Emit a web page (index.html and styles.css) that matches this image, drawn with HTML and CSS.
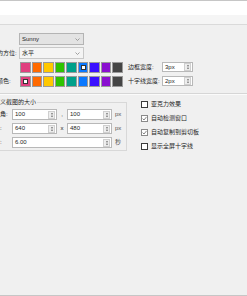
FILE: index.html
```html
<!DOCTYPE html>
<html lang="zh-CN">
<head>
<meta charset="utf-8">
<title>设置</title>
<link rel="stylesheet" href="styles.css">
</head>
<body>
<div class="top"></div>
<div class="band"></div>
<div class="content">
  <div class="form">
    <div class="row">
      <span class="lbl">主题:</span>
      <div class="combo combo-gray"><span class="ctext">Sunny</span><svg class="chev" width="5" height="3" viewBox="0 0 5 3"><path d="M0.5 0.5 L2.5 2.5 L4.5 0.5" fill="none" stroke="#8a8a8a" stroke-width="0.8"/></svg></div>
    </div>
    <div class="row">
      <span class="lbl">工具栏的方位:</span>
      <div class="combo combo-light"><span class="ctext">水平</span><svg class="chev" width="5" height="3" viewBox="0 0 5 3"><path d="M0.5 0.5 L2.5 2.5 L4.5 0.5" fill="none" stroke="#8a8a8a" stroke-width="0.8"/></svg></div>
    </div>
    <div class="row">
      <span class="lbl">颜色:</span>
      <div class="swatches">
        <span class="sw c1"></span><span class="sw c2"></span><span class="sw c3"></span><span class="sw c4"></span><span class="sw c5"></span><span class="sw c6 sel"></span><span class="sw c7"></span><span class="sw c8"></span><span class="sw c9"></span>
      </div>
      <span class="lbl2">边框宽度:</span>
      <div class="spinbox w-px"><span class="itext">3px</span><span class="spin"><svg width="5" height="8" viewBox="0 0 5 8"><path d="M2.5 1 L4 3 L1 3 Z M1 5 L4 5 L2.5 7 Z" fill="#555"/></svg></span></div>
    </div>
    <div class="row">
      <span class="lbl">十字线颜色:</span>
      <div class="swatches">
        <span class="sw c1 sel"></span><span class="sw c2"></span><span class="sw c3"></span><span class="sw c4"></span><span class="sw c5"></span><span class="sw c6"></span><span class="sw c7"></span><span class="sw c8"></span><span class="sw c9"></span>
      </div>
      <span class="lbl2">十字线宽度:</span>
      <div class="spinbox w-px"><span class="itext">2px</span><span class="spin"><svg width="5" height="8" viewBox="0 0 5 8"><path d="M2.5 1 L4 3 L1 3 Z M1 5 L4 5 L2.5 7 Z" fill="#555"/></svg></span></div>
    </div>
  </div>
  <div class="sep"></div>
  <div class="lower">
    <fieldset class="group">
      <legend>自定义截图的大小</legend>
      <div class="grow">
        <span class="glbl">左上角:</span>
        <div class="spinbox w-half"><span class="itext">100</span><span class="spin"><svg width="5" height="8" viewBox="0 0 5 8"><path d="M2.5 1 L4 3 L1 3 Z M1 5 L4 5 L2.5 7 Z" fill="#555"/></svg></span></div>
        <span class="mid">,</span>
        <div class="spinbox w-half"><span class="itext">100</span><span class="spin"><svg width="5" height="8" viewBox="0 0 5 8"><path d="M2.5 1 L4 3 L1 3 Z M1 5 L4 5 L2.5 7 Z" fill="#555"/></svg></span></div>
        <span class="unit">px</span>
      </div>
      <div class="grow">
        <span class="glbl">大小:</span>
        <div class="spinbox w-half"><span class="itext">640</span><span class="spin"><svg width="5" height="8" viewBox="0 0 5 8"><path d="M2.5 1 L4 3 L1 3 Z M1 5 L4 5 L2.5 7 Z" fill="#555"/></svg></span></div>
        <span class="mid">x</span>
        <div class="spinbox w-half"><span class="itext">480</span><span class="spin"><svg width="5" height="8" viewBox="0 0 5 8"><path d="M2.5 1 L4 3 L1 3 Z M1 5 L4 5 L2.5 7 Z" fill="#555"/></svg></span></div>
        <span class="unit">px</span>
      </div>
      <div class="grow">
        <span class="glbl">延时:</span>
        <div class="spinbox w-full"><span class="itext">6.00</span><span class="spin"><svg width="5" height="8" viewBox="0 0 5 8"><path d="M2.5 1 L4 3 L1 3 Z M1 5 L4 5 L2.5 7 Z" fill="#555"/></svg></span></div>
        <span class="unit">秒</span>
      </div>
    </fieldset>
    <div class="checks">
      <label class="chk"><span class="box"></span><span>亚克力效果</span></label>
      <label class="chk"><span class="box on"><svg width="5" height="5" viewBox="0 0 5 5"><path d="M0.6 2.6 L2 4 L4.5 0.9" fill="none" stroke="#666" stroke-width="0.8"/></svg></span><span>自动检测窗口</span></label>
      <label class="chk"><span class="box on"><svg width="5" height="5" viewBox="0 0 5 5"><path d="M0.6 2.6 L2 4 L4.5 0.9" fill="none" stroke="#666" stroke-width="0.8"/></svg></span><span>自动复制到剪切板</span></label>
      <label class="chk"><span class="box"></span><span>显示全屏十字线</span></label>
    </div>
  </div>
</div>
<div class="spacer"></div>
<div class="bottom"></div>
</body>
</html>
```

FILE: styles.css
```css
html, body {
  margin: 0;
  padding: 0;
}

body {
  width: 247px;
  height: 296px;
  overflow: hidden;
  background: #f0f0f0;
  font-family: "Liberation Sans", "Noto Sans CJK SC", sans-serif;
  font-size: 6px;
  line-height: 7px;
  color: #1e1e1e;
  display: flex;
  flex-direction: column;
}

.top {
  height: 15px;
  flex: none;
  box-sizing: border-box;
  background: #ffffff;
  border-top: 1px solid #c6c6c6;
}

.band {
  height: 10px;
  flex: none;
  box-sizing: border-box;
  background: #f5f5f5;
  border-bottom: 1px solid #dadada;
}

.content {
  padding-top: 8px;
  display: flex;
  flex-direction: column;
}

.form {
  display: flex;
  flex-direction: column;
  gap: 2px;
  margin-left: -21px;
}

.row {
  display: flex;
  align-items: center;
  height: 12px;
}

.lbl {
  width: 40px;
  flex: none;
  white-space: nowrap;
}

.combo {
  width: 65px;
  height: 12px;
  box-sizing: border-box;
  display: flex;
  align-items: center;
  justify-content: space-between;
  padding: 0 3px 0 2px;
  border: 1px solid #b4b4b4;
}

.combo-gray {
  background: #e3e3e3;
}

.combo-light {
  background: #f4f4f4;
  border-color: #c8c8c8;
}

.swatches {
  width: 103px;
  margin-left: 1px;
  display: grid;
  grid-template-columns: repeat(9, 1fr);
  gap: 1px;
  flex: none;
}

.sw {
  height: 11px;
  box-sizing: border-box;
  border: 1px solid #9a9a9a;
  display: flex;
  align-items: center;
  justify-content: center;
}

.sw.sel::after {
  content: "";
  width: 3px;
  height: 3px;
  background: #fff;
  border: 1px solid #333;
}

.c1 { background: #e0407f; }
.c2 { background: #ff6a00; }
.c3 { background: #ffc800; }
.c4 { background: #2ec400; }
.c5 { background: #00a08a; }
.c6 { background: #0a78ff; }
.c7 { background: #3a10ff; }
.c8 { background: #8a0fd0; }
.c9 { background: #454545; }

.lbl2 {
  width: 34px;
  margin-left: 5px;
  flex: none;
  white-space: nowrap;
}

.spinbox {
  height: 11px;
  box-sizing: border-box;
  background: #ffffff;
  border: 1px solid #b8b8b8;
  display: flex;
  align-items: center;
  justify-content: space-between;
  padding: 0 0 0 2px;
  flex: none;
}

.w-px {
  width: 31px;
  height: 10px;
}

.w-half {
  width: 45px;
}

.w-full {
  width: 100px;
}

.spin {
  width: 7px;
  height: 8px;
  margin-right: 1px;
  box-sizing: border-box;
  background: #eeeeee;
  border: 1px solid #cfcfcf;
  display: flex;
  align-items: center;
  justify-content: center;
}

.spin svg {
  width: 4px;
  height: 6px;
}

.sep {
  height: 2px;
  box-sizing: border-box;
  margin-top: 6px;
  border-top: 1px solid #d6d6d6;
  border-bottom: 1px solid #fbfbfb;
}

.lower {
  display: flex;
  align-items: flex-start;
  padding-top: 4px;
}

.group {
  width: 145px;
  flex: none;
  box-sizing: border-box;
  margin: 0 0 0 -18px;
  padding: 3px 0 2px 5px;
  border: 1px solid #d8d8d8;
  display: flex;
  flex-direction: column;
  gap: 3px;
  min-width: 0;
}

.group legend {
  padding: 0 1px;
  margin-left: -1px;
  line-height: 7px;
  white-space: nowrap;
}

.grow {
  display: flex;
  align-items: center;
  height: 11px;
}

.glbl {
  width: 24px;
  flex: none;
  white-space: nowrap;
}

.mid {
  width: 10px;
  text-align: center;
  flex: none;
}

.unit {
  margin-left: 3px;
  color: #555;
}

.checks {
  margin-left: 14px;
  display: flex;
  flex-direction: column;
  gap: 4px;
}

.chk {
  display: flex;
  align-items: center;
  gap: 3px;
  height: 10px;
  white-space: nowrap;
}

.box {
  width: 7px;
  height: 7px;
  box-sizing: border-box;
  border: 1px solid #3a3a3a;
  background: #ffffff;
  display: flex;
  align-items: center;
  justify-content: center;
}

.box.on {
  border-color: #8a8a8a;
}

.spacer {
  flex: 1;
}

.bottom {
  height: 1px;
  flex: none;
  background: #c6c6c6;
}
```
